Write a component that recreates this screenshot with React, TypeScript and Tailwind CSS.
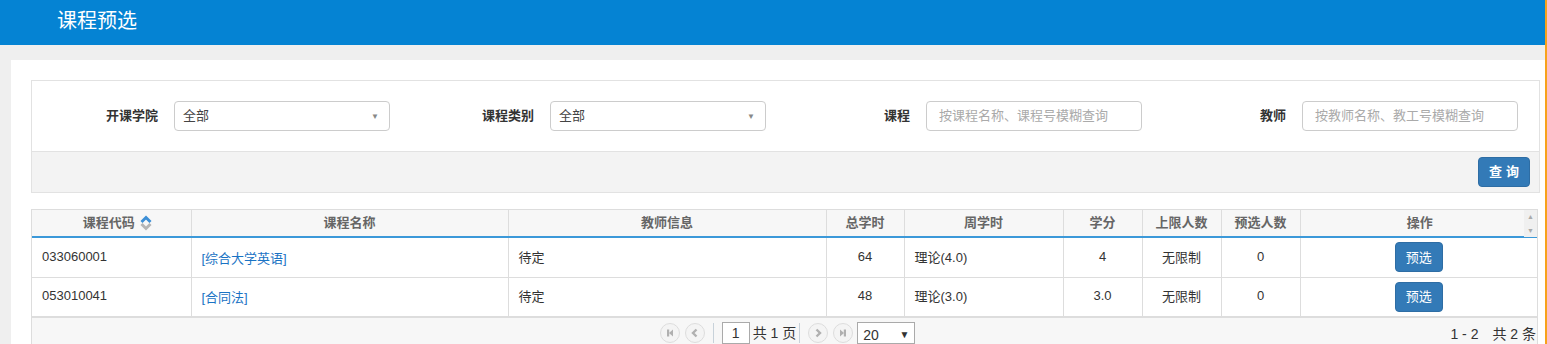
const rows = [
  { code: '033060001', name: '[综合大学英语]', teacher: '待定', total: '64', week: '理论(4.0)', credit: '4', limit: '无限制', count: '0' },
  { code: '053010041', name: '[合同法]', teacher: '待定', total: '48', week: '理论(3.0)', credit: '3.0', limit: '无限制', count: '0' },
];

function SelectBox({ value }: { value: string }) {
  return (
    <div className="relative w-[216px] h-[30px] border border-[#ccc] rounded-[4px] bg-white">
      <span className="absolute left-[8px] top-[4px] text-[13px] text-[#444]">{value}</span>
      <span className="absolute right-[10px] top-[9px] text-[8px] text-[#888]">▼</span>
    </div>
  );
}

function TextBox({ placeholder }: { placeholder: string }) {
  return (
    <div className="w-[216px] h-[30px] border border-[#ccc] rounded-[4px] bg-white flex items-center px-[12px]">
      <span className="text-[13px] text-[#aaa] whitespace-nowrap">{placeholder}</span>
    </div>
  );
}

function Field({ label, children }: { label: string; children: React.ReactNode }) {
  return (
    <div className="w-[376px] flex items-center">
      <div className="w-[126px] text-right text-[13px] font-bold text-[#333]">{label}</div>
      <div className="ml-4">{children}</div>
    </div>
  );
}

function PageBtn({ dir }: { dir: 'first' | 'prev' | 'next' | 'last' }) {
  return (
    <div className="w-[20px] h-[20px] rounded-full border border-[#ddd] bg-[#f4f4f4] flex items-center justify-center">
      <svg width="10" height="10" viewBox="0 0 10 10">
        {dir === 'first' && (
          <g fill="#b0b0b0">
            <rect x="2" y="1.5" width="2.2" height="7" />
            <path d="M8 1.5 L4 5 L8 8.5 Z" />
          </g>
        )}
        {dir === 'last' && (
          <g fill="#b0b0b0">
            <rect x="5.8" y="1.5" width="2.2" height="7" />
            <path d="M2 1.5 L6 5 L2 8.5 Z" />
          </g>
        )}
        {dir === 'prev' && <path d="M6.5 1.5 L3 5 L6.5 8.5" stroke="#b0b0b0" strokeWidth="2.4" fill="none" />}
        {dir === 'next' && <path d="M3.5 1.5 L7 5 L3.5 8.5" stroke="#b0b0b0" strokeWidth="2.4" fill="none" />}
      </svg>
    </div>
  );
}

export default function App() {
  const td = 'border-r border-[#ddd] px-[10px] text-[13px] text-[#333]';
  const th = 'border-r border-[#ddd] text-[13px] font-bold text-[#666] text-center';

  return (
    <div
      className="w-[1547px] h-[344px] overflow-hidden bg-[#efefef] border-r-2 border-[#f7a21b]"
      style={{ fontFamily: '"Liberation Sans", "Noto Sans CJK SC", sans-serif' }}
    >
      {/* Header */}
      <div className="h-[45px] bg-[#0583d3] flex items-center pl-[57px]">
        <h1 className="text-[20px] text-white leading-none -mt-[3px]">课程预选</h1>
      </div>

      {/* Panel */}
      <div className="mt-[15px] ml-[11px] bg-white pl-[20px] pr-[5px] pt-[20px] h-[284px]">
        {/* Filters */}
        <div className="border border-[#e2e2e2]">
          <div className="h-[70px] flex items-center">
            <Field label="开课学院">
              <SelectBox value="全部" />
            </Field>
            <Field label="课程类别">
              <SelectBox value="全部" />
            </Field>
            <Field label="课程">
              <TextBox placeholder="按课程名称、课程号模糊查询" />
            </Field>
            <Field label="教师">
              <TextBox placeholder="按教师名称、教工号模糊查询" />
            </Field>
          </div>
          <div className="h-[41px] border-t border-[#e2e2e2] bg-[#f3f3f3] flex items-center justify-end pr-[9px]">
            <button className="w-[52px] h-[30px] rounded-[4px] bg-[#337ab7] border border-[#2e6da4] text-white text-[13px] font-bold tracking-[4px] pl-[4px]">
              查询
            </button>
          </div>
        </div>

        {/* Table */}
        <div className="mt-[16px] w-[1507px] border border-[#ddd] bg-[#f7f7f7]">
          <table className="w-full table-fixed border-collapse">
            <colgroup>
              <col className="w-[159px]" />
              <col className="w-[317px]" />
              <col className="w-[318px]" />
              <col className="w-[78px]" />
              <col className="w-[159px]" />
              <col className="w-[79px]" />
              <col className="w-[79px]" />
              <col className="w-[79px]" />
              <col />
            </colgroup>
            <thead>
              <tr className="h-[27px] bg-[#f7f7f7] border-b-2 border-[#3c99d9]">
                <th className={`${th} pl-[12px]`}>
                  <span className="inline-flex items-center gap-[5px]">
                    课程代码
                    <svg width="12" height="16" viewBox="0 0 12 16" className="shrink-0">
                      <path d="M1.5 7 L6 2.5 L10.5 7" stroke="#3d8fd6" strokeWidth="3" fill="none" strokeLinejoin="miter" />
                      <path d="M1.5 9 L6 13.5 L10.5 9" stroke="#b5b5b5" strokeWidth="3" fill="none" strokeLinejoin="miter" />
                    </svg>
                  </span>
                </th>
                <th className={th}>课程名称</th>
                <th className={th}>教师信息</th>
                <th className={th}>总学时</th>
                <th className={th}>周学时</th>
                <th className={th}>学分</th>
                <th className={th}>上限人数</th>
                <th className={th}>预选人数</th>
                <th className="text-[13px] font-bold text-[#666] text-center relative pl-[2px]">
                  操作
                  <div className="absolute right-0 top-0 w-[13px] h-[27px] bg-[#f0f0f0] flex flex-col items-center justify-between py-[3px]">
                    <span className="text-[7px] leading-none text-[#aaa]">▲</span>
                    <span className="text-[7px] leading-none text-[#aaa]">▼</span>
                  </div>
                </th>
              </tr>
            </thead>
            <tbody className="bg-white">
              {rows.map((r, i) => (
                <tr key={r.code} className={`h-[40px] ${i === 0 ? 'border-b border-[#ddd]' : 'border-b-2 border-[#ddd]'}`}>
                  <td className={`${td} pb-[2px]`}>{r.code}</td>
                  <td className={`${td} pt-[2px]`}>
                    <a className="text-[#1a73c4]">{r.name}</a>
                  </td>
                  <td className={td}>{r.teacher}</td>
                  <td className={`${td} text-center pb-[2px]`}>{r.total}</td>
                  <td className={td}>{r.week}</td>
                  <td className={`${td} text-center pb-[2px]`}>{r.credit}</td>
                  <td className={`${td} text-center`}>{r.limit}</td>
                  <td className={`${td} text-center pb-[2px]`}>{r.count}</td>
                  <td className="text-center">
                    <button className="w-[48px] h-[30px] rounded-[4px] bg-[#337ab7] border border-[#2e6da4] text-white text-[13px]">
                      预选
                    </button>
                  </td>
                </tr>
              ))}
            </tbody>
          </table>

          {/* Pager */}
          <div className="relative h-[30px] flex items-start justify-center pt-[4px]">
            <div className="flex items-center ml-[6px]">
              <PageBtn dir="first" />
              <div className="ml-[5px]"><PageBtn dir="prev" /></div>
              <div className="w-[1px] h-[20px] bg-[#c8d2da] ml-[8px]" />
              <div className="ml-[8px] w-[28px] h-[22px] border border-[#aaa] bg-white text-[14px] text-[#333] flex items-center justify-center">1</div>
              <span className="ml-[3px] text-[14px] text-[#333]">共 1 页</span>
              <div className="w-[1px] h-[20px] bg-[#c8d2da] ml-[3px]" />
              <div className="ml-[8px]"><PageBtn dir="next" /></div>
              <div className="ml-[5px]"><PageBtn dir="last" /></div>
              <div className="relative ml-[4px] w-[58px] h-[22px] border border-[#aaa] bg-white">
                <span className="absolute left-[5px] top-[2px] text-[14px] text-[#333]">20</span>
                <span className="absolute right-[5px] top-[4px] text-[10px] text-[#333]">▼</span>
              </div>
            </div>
            <div className="absolute right-[1px] top-[6px] text-[14px] text-[#333]">1 - 2　共 2 条</div>
          </div>
        </div>
      </div>
    </div>
  );
}
